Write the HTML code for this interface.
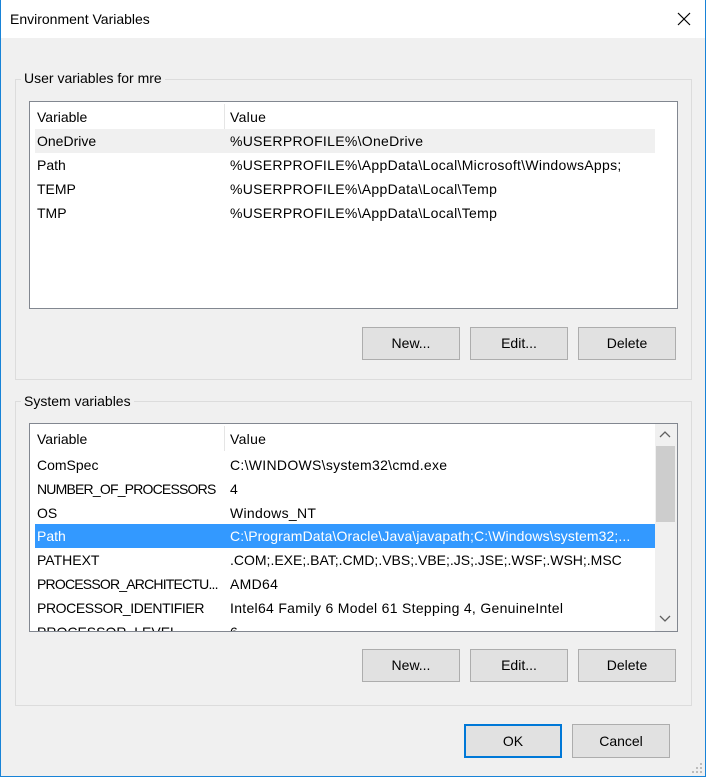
<!DOCTYPE html>
<html><head><style>
*{margin:0;padding:0;box-sizing:border-box}
body{width:706px;height:777px;background:#f0f0f0;font-family:"Liberation Sans",sans-serif;font-size:14px;color:#000;position:relative;overflow:hidden}
.a{position:absolute}
.win{left:0;top:0;width:706px;height:777px;border:1px solid #1883d7;border-top:none}
.title{left:0;top:0;width:706px;height:38px;background:#fff}
.gb{border:1px solid #dcdcdc}
.legend{background:#f0f0f0;padding:0 3px}
.list{background:#fff;border:1px solid #828790;overflow:hidden}
.row{position:absolute;left:5px;height:24px;line-height:24px;white-space:nowrap}
.c1{position:absolute;left:2px}
.c2{position:absolute;left:195px;letter-spacing:0.3px}
.btn{background:#e1e1e1;border:1px solid #adadad;text-align:center;line-height:30px}
.n{letter-spacing:-0.8px}
</style></head><body>
<div class="a title"></div>
<div class="a" style="left:10px;top:11px;font-size:14px">Environment Variables</div>
<svg class="a" style="left:677px;top:12px" width="14" height="14"><path d="M1 1L13 13M13 1L1 13" stroke="#000" stroke-width="1.2"/></svg>

<div class="a gb" style="left:15px;top:79px;width:677px;height:301px"></div>
<div class="a legend" style="left:21px;top:70px">User variables for mre</div>
<div class="a list" style="left:29px;top:101px;width:649px;height:208px">
 <div class="a" style="left:194px;top:2px;width:1px;height:25px;background:#e5e5e5"></div>
 <div class="row" style="top:3px;width:620px"><span class="c1">Variable</span><span class="c2">Value</span></div>
 <div class="row" style="top:27px;width:620px;background:#f0f0f0"><span class="c1">OneDrive</span><span class="c2">%USERPROFILE%\OneDrive</span></div>
 <div class="row" style="top:51px"><span class="c1">Path</span><span class="c2">%USERPROFILE%\AppData\Local\Microsoft\WindowsApps;</span></div>
 <div class="row" style="top:75px"><span class="c1">TEMP</span><span class="c2">%USERPROFILE%\AppData\Local\Temp</span></div>
 <div class="row" style="top:99px"><span class="c1">TMP</span><span class="c2">%USERPROFILE%\AppData\Local\Temp</span></div>
</div>
<div class="a btn" style="left:362px;top:327px;width:98px;height:33px">New...</div>
<div class="a btn" style="left:470px;top:327px;width:98px;height:33px">Edit...</div>
<div class="a btn" style="left:578px;top:327px;width:98px;height:33px">Delete</div>

<div class="a gb" style="left:15px;top:401px;width:677px;height:305px"></div>
<div class="a legend" style="left:21px;top:393px">System variables</div>
<div class="a list" style="left:29px;top:423px;width:649px;height:209px">
 <div class="a" style="left:194px;top:2px;width:1px;height:25px;background:#e5e5e5"></div>
 <div class="row" style="top:3px"><span class="c1">Variable</span><span class="c2">Value</span></div>
 <div class="row" style="top:29px"><span class="c1">ComSpec</span><span class="c2">C:\WINDOWS\system32\cmd.exe</span></div>
 <div class="row" style="top:53px"><span class="c1 n">NUMBER_OF_PROCESSORS</span><span class="c2">4</span></div>
 <div class="row" style="top:77px"><span class="c1">OS</span><span class="c2">Windows_NT</span></div>
 <div class="row" style="top:100px;width:620px;background:#3399ff;color:#fff"><span class="c1">Path</span><span class="c2" style="letter-spacing:0.1px">C:\ProgramData\Oracle\Java\javapath;C:\Windows\system32;...</span></div>
 <div class="row" style="top:124px"><span class="c1">PATHEXT</span><span class="c2" style="letter-spacing:0">.COM;.EXE;.BAT;.CMD;.VBS;.VBE;.JS;.JSE;.WSF;.WSH;.MSC</span></div>
 <div class="row" style="top:148px"><span class="c1 n">PROCESSOR_ARCHITECTU...</span><span class="c2">AMD64</span></div>
 <div class="row" style="top:172px"><span class="c1" style="letter-spacing:-0.4px">PROCESSOR_IDENTIFIER</span><span class="c2">Intel64 Family 6 Model 61 Stepping 4, GenuineIntel</span></div>
 <div class="row" style="top:196px"><span class="c1">PROCESSOR_LEVEL</span><span class="c2">6</span></div>
 <div class="a" style="left:625px;top:0;width:22px;height:207px;background:#f0f0f0"></div>
 <div class="a" style="left:626px;top:22px;width:19px;height:76px;background:#cdcdcd"></div>
 <svg class="a" style="left:629px;top:7px" width="12" height="8"><path d="M1 6L6 1L11 6" stroke="#606060" stroke-width="1.3" fill="none"/></svg>
 <svg class="a" style="left:629px;top:191px" width="12" height="8"><path d="M1 1L6 6L11 1" stroke="#606060" stroke-width="1.3" fill="none"/></svg>
</div>
<div class="a btn" style="left:362px;top:649px;width:98px;height:33px">New...</div>
<div class="a btn" style="left:470px;top:649px;width:98px;height:33px">Edit...</div>
<div class="a btn" style="left:578px;top:649px;width:98px;height:33px">Delete</div>

<div class="a btn" style="left:464px;top:724px;width:98px;height:34px;border:2px solid #0078d7;line-height:30px">OK</div>
<div class="a btn" style="left:572px;top:724px;width:98px;height:34px;line-height:32px">Cancel</div>
<svg class="a" style="left:692px;top:763px" width="12" height="12" fill="#bcbcbc"><rect x="8" y="0" width="2" height="2"/><rect x="4" y="4" width="2" height="2"/><rect x="8" y="4" width="2" height="2"/><rect x="0" y="8" width="2" height="2"/><rect x="4" y="8" width="2" height="2"/><rect x="8" y="8" width="2" height="2"/></svg>
<div class="a win"></div>
</body></html>
